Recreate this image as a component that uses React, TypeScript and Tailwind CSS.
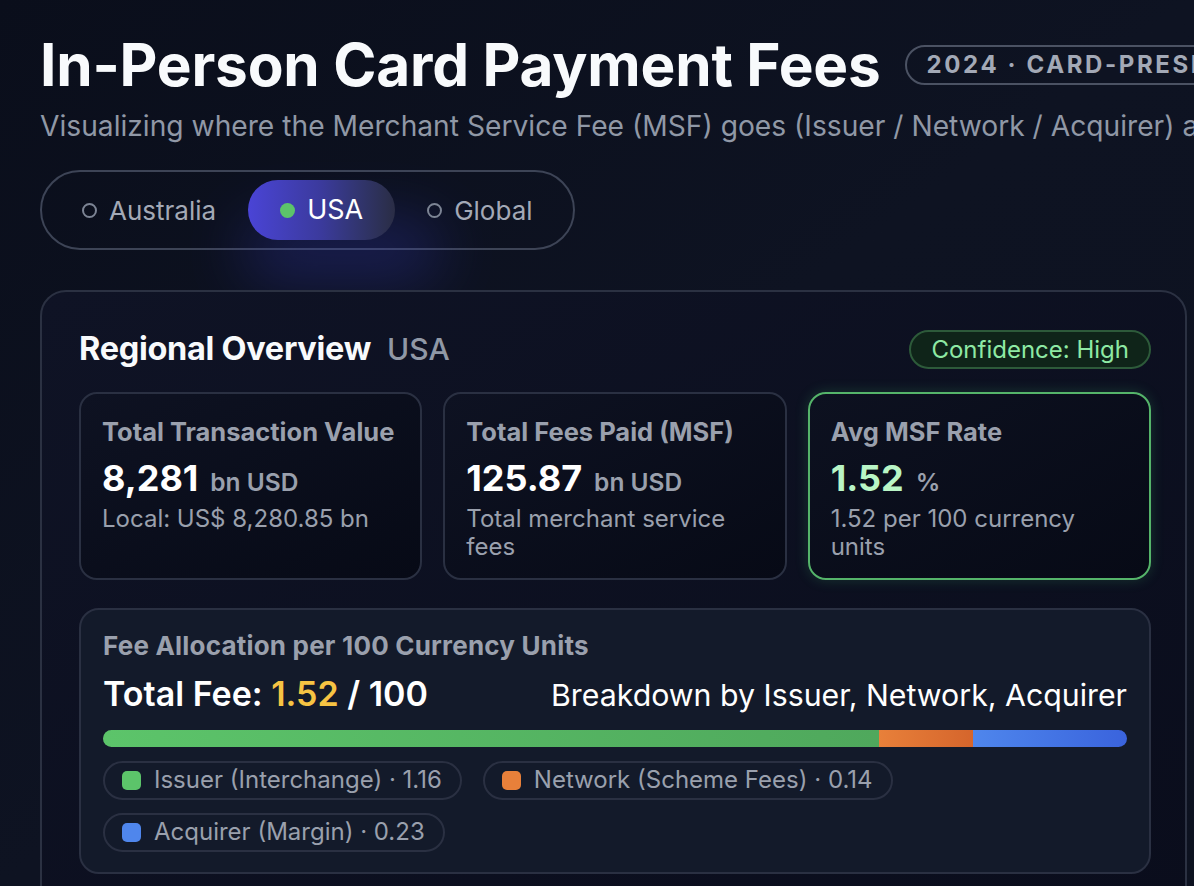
import React from "react";

type Region = "Australia" | "USA" | "Global";

const segments = [
  { label: "Issuer (Interchange)", value: 1.16, bar: "bg-gradient-to-r from-[#5cc46a] to-[#4fa85c]", dot: "bg-[#5cc46a]" },
  { label: "Network (Scheme Fees)", value: 0.14, bar: "bg-gradient-to-r from-[#e8803a] to-[#d5652c]", dot: "bg-[#e8803a]" },
  { label: "Acquirer (Margin)", value: 0.23, bar: "bg-gradient-to-r from-[#4f86ec] to-[#3a63dd]", dot: "bg-[#4f86ec]" },
];

function StatCard({
  label,
  value,
  unit,
  sub,
  highlight,
}: {
  label: string;
  value: string;
  unit: string;
  sub: string;
  highlight?: boolean;
}) {
  return (
    <div
      className={
        highlight
          ? "flex-1 rounded-[18px] border-2 border-[#55b46a] bg-gradient-to-br from-[#0d1120] to-[#070a16] px-[21px] pt-[22px] pb-[17px] shadow-[0_0_14px_rgba(74,222,128,0.18)]"
          : "flex-1 rounded-[18px] border-2 border-[#2a3042] bg-gradient-to-br from-[#0e1222] to-[#070a16] px-[21px] pt-[22px] pb-[17px]"
      }
    >
      <div className="text-[25.5px] font-bold leading-[32px] text-[#9aa0ad]">{label}</div>
      <div className="mt-[8px] flex items-baseline gap-3">
        <span className={highlight ? "text-[36px] font-bold leading-[44px] text-[#b9f5c6]" : "text-[36px] font-bold leading-[44px] text-white"}>
          {value}
        </span>
        <span className="text-[24.5px] font-semibold text-[#9aa0ad]">{unit}</span>
      </div>
      <div className="mt-[4px] text-[24px] leading-[28px] text-[#9aa0ad]">{sub}</div>
    </div>
  );
}

export default function App() {
  const [region, setRegion] = React.useState<Region>("USA");

  return (
    <div className="h-[886px] w-[1194px] overflow-hidden bg-gradient-to-br from-[#0a0e1b] via-[#0e1322] to-[#0d1220] font-['Inter',sans-serif]">
      <div className="pl-10 pt-[33px]">
        <div className="flex items-center gap-6 whitespace-nowrap">
          <h1 className="text-[58.5px] font-bold leading-[64px] tracking-[-0.2px] text-[#f8fafc]">In-Person Card Payment Fees</h1>
          <span className="rounded-full border-2 border-[#4b5263] px-5 py-[4px] text-[24px] font-bold uppercase leading-[28px] tracking-[2.6px] text-[#a3a9b6]">
            2024 · Card-Present
          </span>
        </div>
        <p className="mt-[12px] whitespace-nowrap text-[28.2px] leading-[34px] text-[#9098a6]">
          Visualizing where the Merchant Service Fee (MSF) goes (Issuer / Network / Acquirer) across regions
        </p>

        <div className="relative mt-[27px] inline-flex items-center rounded-full border-2 border-[#3d4456] px-[8px] py-[8px]">
          <div className="pointer-events-none absolute left-[200px] top-[48px] h-[60px] w-[200px] rounded-full bg-[#3b3fd0] opacity-30 blur-[30px]" />
          {(["Australia", "USA", "Global"] as Region[]).map((r) => {
            const active = r === region;
            return (
              <button
                key={r}
                onClick={() => setRegion(r)}
                className={
                  active
                    ? "relative flex h-[60px] items-center gap-3 rounded-full bg-gradient-to-r from-[#4a44d6] via-[#3b3a9c] to-[#2a2d45] px-8 text-[27px] text-white"
                    : "relative flex h-[60px] items-center gap-3 rounded-full px-8 text-[26px] text-[#a3a9b6]"
                }
              >
                <span
                  className={
                    active
                      ? "h-[15px] w-[15px] rounded-full bg-[#5cc46a]"
                      : "h-[15px] w-[15px] rounded-full border-2 border-[#7c8494]"
                  }
                />
                {r}
              </button>
            );
          })}
        </div>

        <section className="relative mt-[40px] w-[1147px] rounded-[26px] border-2 border-[#2b3142] bg-gradient-to-br from-[#0f1325] to-[#0a0d1c] pl-[37px] pr-[34px] pt-[35px] pb-10">
          <div className="flex items-center justify-between">
            <div className="flex items-baseline gap-4">
              <h2 className="text-[32.5px] font-bold leading-[40px] tracking-[-0.3px] text-[#f8fafc]">Regional Overview</h2>
              <span className="text-[30px] font-medium text-[#9098a6]">{region}</span>
            </div>
            <span className="rounded-full border-2 border-[#2d5a3a] bg-[#0f2419] px-5 py-[1px] text-[24px] leading-[33px] text-[#8ee9a4]">
              Confidence: High
            </span>
          </div>

          <div className="mt-[20px] flex gap-[21px]">
            <StatCard label="Total Transaction Value" value="8,281" unit="bn USD" sub="Local: US$ 8,280.85 bn" />
            <StatCard label="Total Fees Paid (MSF)" value="125.87" unit="bn USD" sub="Total merchant service fees" />
            <StatCard label="Avg MSF Rate" value="1.52" unit="%" sub="1.52 per 100 currency units" highlight />
          </div>

          <div className="mt-[28px] rounded-[20px] border-2 border-[#2a3042] bg-[#131a2a] px-[22px] pt-[18px] pb-[20px]">
            <div className="text-[26px] font-bold leading-[36px] tracking-[0.2px] text-[#9aa0ad]">Fee Allocation per 100 Currency Units</div>
            <div className="mt-[10px] flex items-baseline justify-between">
              <div className="text-[34px] font-semibold leading-[40px] text-white">
                Total Fee: <span className="text-[#f6c343]">1.52</span> / 100
              </div>
              <div className="text-[30.3px] leading-[36px] text-white">Breakdown by Issuer, Network, Acquirer</div>
            </div>
            <div className="mt-[16px] flex h-[17px] overflow-hidden rounded-full bg-[#1f2637]">
              {segments.map((s) => (
                <div key={s.label} className={s.bar} style={{ width: `${(s.value / 1.53) * 100}%` }} />
              ))}
            </div>
            <div className="mt-[14px] flex flex-wrap gap-x-[21px] gap-y-[13px]">
              {segments.map((s) => (
                <span
                  key={s.label}
                  className="inline-flex h-[39px] items-center gap-[13px] rounded-full border-2 border-[#2a3042] pl-[17px] pr-[18px] text-[24px] text-[#9aa0ad]"
                >
                  <span className={`h-[19px] w-[19px] rounded-[5px] ${s.dot}`} />
                  {s.label} · {s.value.toFixed(2)}
                </span>
              ))}
            </div>
          </div>
        </section>
      </div>
    </div>
  );
}
